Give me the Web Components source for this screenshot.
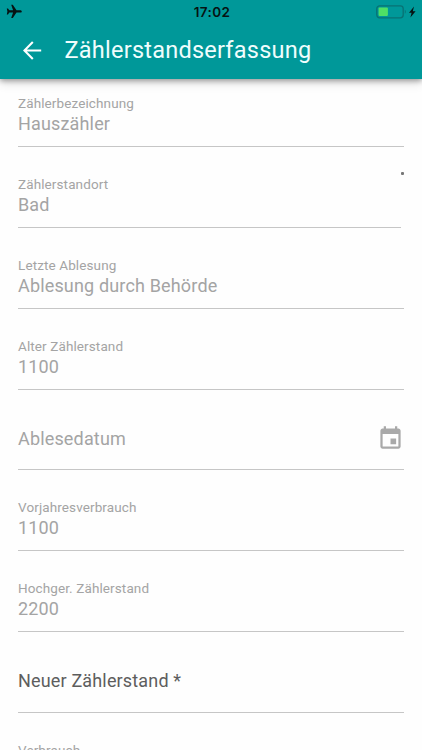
<!DOCTYPE html>
<html lang="de">
<head>
<meta charset="utf-8">
<title>Zählerstandserfassung</title>
<style>
html,body{margin:0;height:100%;overflow:hidden;background:#fefefe}
</style>
</head>
<body>
<meter-page></meter-page>
<script>
const define = (name, html) => {
  const template = document.createElement('template');
  template.innerHTML = html;
  customElements.define(name, class extends HTMLElement {
    constructor() {
      super();
      this.attachShadow({mode: 'open'}).append(template.content.cloneNode(true));
    }
  });
};

define('status-bar', `
<style>
:host{display:grid;grid-template-columns:1fr auto 1fr;align-items:center;height:24px;padding:0 5px 0 6px;box-sizing:border-box;color:#061313}
svg{display:block}
.time{font:600 13.5px/24px Inter,sans-serif;letter-spacing:.35px;padding-left:1px}
.power{justify-self:end}
</style>
<svg width="17" height="16" viewBox="0 0 17 16"><path fill="currentColor" d="M15.8 7.4c0-.8-.9-1.2-1.9-1.2h-3.4L6.8.8H5.2l1.9 5.4H3.3L2 4.4H.8l.6 3-.6 3H2l1.3-1.8h3.8L5.2 14h1.6l3.7-5.4h3.4c1 0 1.9-.4 1.9-1.2z"/></svg>
<span class="time">17:02</span>
<svg class="power" width="41" height="16" viewBox="0 0 41 16"><rect x=".8" y="1.8" width="26.4" height="12" rx="2.8" fill="none" stroke="#087174" stroke-width="1.3"/><rect x="2.6" y="3.6" width="9.3" height="8.4" rx="1" fill="#4fdf65"/><path d="M28.8 5.8c1.3.7 1.3 3.4 0 4z" fill="#087174"/><path d="M38 2.6l-5 6.2h2.6l-1.2 4.7 5.2-6.3h-2.8z" fill="#061313"/></svg>`);

define('app-bar', `
<style>
:host{display:block;position:relative;z-index:1;height:79px;background:#009899;box-shadow:0 2px 5px rgba(0,0,0,.32),0 4px 10px rgba(0,0,0,.13)}
.row{display:flex;align-items:center;height:53px;padding-left:23px;gap:22.5px}
h1{margin:0;padding-bottom:2px;font:400 23.5px/30px Roboto,sans-serif;letter-spacing:.24px;color:#effdfd;white-space:nowrap}
svg{display:block}
</style>
<status-bar></status-bar>
<div class="row">
<svg width="19" height="19" viewBox="0 0 19 19"><path d="M18.2 9.5H1.5M9.8 1.1L1.4 9.5l8.4 8.4" fill="none" stroke="#fff" stroke-width="2.1"/></svg>
<h1><slot></slot></h1>
</div>`);

define('calendar-icon', `
<style>:host{display:block;color:#a9a9a9}svg{display:block}</style>
<svg width="27" height="27" viewBox="0 0 24 24"><path fill="currentColor" d="M17 12h-5v5h5v-5zM16 1v2H8V1H6v2H5c-1.11 0-1.99.9-1.99 2L3 19c0 1.1.89 2 2 2h14c1.1 0 2-.9 2-2V5c0-1.1-.9-2-2-2h-1V1h-2zm3 18H5V8h14v11z"/></svg>`);

define('meter-field', `
<style>
:host{display:block;height:80.86px;font-family:Roboto,sans-serif;color:#a4a4a4}
.box{display:flex;flex-direction:column;height:52px;box-sizing:border-box;border-bottom:1px solid #c6c6c6;margin-right:var(--inset,0)}
.label{font-size:13.5px;line-height:17px;letter-spacing:.11px}
.value{font-size:18px;line-height:24px;letter-spacing:.16px}
.label,.value{white-space:nowrap}
:host([empty]) .label{display:none}
:host([empty]) .box{flex-direction:row;align-items:center;justify-content:space-between;padding-bottom:10px}
:host([active]){color:#5d5d5d}
:host([active]) .box{padding-bottom:11px}
</style>
<div class="box"><div class="label"><slot name="label"></slot></div><div class="value"><slot></slot></div><slot name="icon"></slot></div>`);

define('meter-page', `
<style>
:host{display:block;height:750px;overflow:hidden;position:relative}
main{padding:16px 18px 0}
.narrow{--inset:3px}
calendar-icon{height:27px;margin-right:.5px}
.speck{position:absolute;left:401px;top:172px;width:3px;height:3px;border-radius:1px;background:#777}
</style>
<app-bar>Zählerstandserfassung</app-bar>
<main>
<meter-field><span slot="label">Zählerbezeichnung</span>Hauszähler</meter-field>
<meter-field class="narrow"><span slot="label">Zählerstandort</span>Bad</meter-field>
<meter-field><span slot="label">Letzte Ablesung</span>Ablesung durch Behörde</meter-field>
<meter-field><span slot="label">Alter Zählerstand</span>1100</meter-field>
<meter-field empty>Ablesedatum<calendar-icon slot="icon"></calendar-icon></meter-field>
<meter-field><span slot="label">Vorjahresverbrauch</span>1100</meter-field>
<meter-field><span slot="label">Hochger. Zählerstand</span>2200</meter-field>
<meter-field empty active>Neuer Zählerstand *</meter-field>
<meter-field><span slot="label">Verbrauch</span></meter-field>
</main>
<div class="speck"></div>`);
</script>
</body>
</html>
